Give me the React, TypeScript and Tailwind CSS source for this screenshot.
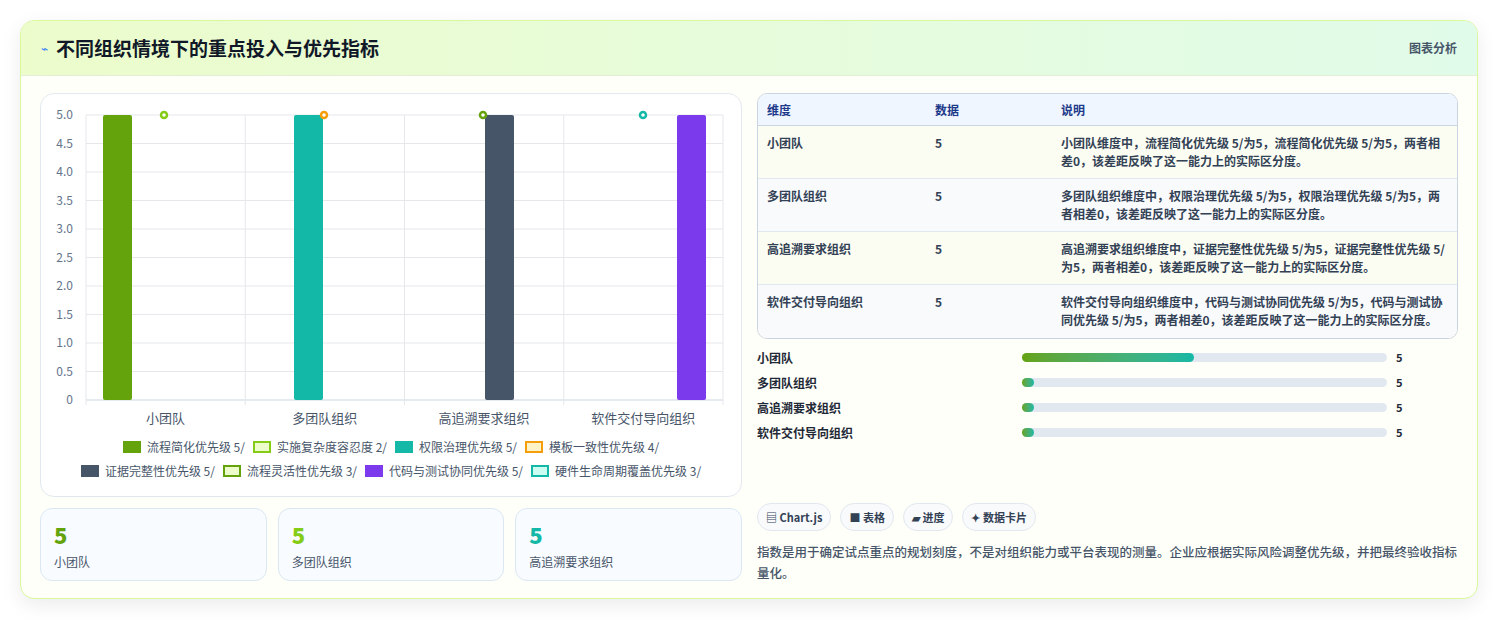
import React from "react";

const F = { fontFamily: '"Noto Sans CJK SC", "Noto Sans", sans-serif' };

function Chart() {
  const x0 = 45, x1 = 682, yTop = 15, yBot = 300;
  const ticks = ["5.0","4.5","4.0","3.5","3.0","2.5","2.0","1.5","1.0","0.5","0"];
  const cw = (x1 - x0) / 4;
  const bars = [
    { x: 62, c: "#65a30d" }, { x: 253, c: "#14b8a6" }, { x: 444, c: "#475569" }, { x: 636, c: "#7c3aed" },
  ];
  const dots = [
    { x: 123, c: "#84cc16" }, { x: 283, c: "#f59e0b" }, { x: 442, c: "#65a30d" }, { x: 602, c: "#14b8a6" },
  ];
  const cats = ["小团队", "多团队组织", "高追溯要求组织", "软件交付导向组织"];
  return (
    <svg width="700" height="332" style={F}>
      {ticks.map((t, i) => {
        const y = yTop + i * 28.5;
        return (
          <g key={t}>
            <line x1={x0} x2={x1} y1={y} y2={y} stroke={i === 10 ? "#cbd5e1" : "#e5e7eb"} />
            <text x={32} y={y + 4} fontSize="12" fill="#64748b" textAnchor="end">{t}</text>
          </g>
        );
      })}
      {[0, 1, 2, 3, 4].map(i => (
        <line key={i} x1={x0 + i * cw} x2={x0 + i * cw} y1={yTop} y2={yBot + 5} stroke="#e5e7eb" />
      ))}
      {bars.map((b, i) => (
        <rect key={i} x={b.x} y={yTop} width={29} height={yBot - yTop} rx={2} fill={b.c} />
      ))}
      {dots.map((d, i) => (
        <circle key={i} cx={d.x} cy={yTop} r={3} fill="#fff" stroke={d.c} strokeWidth={2.5} />
      ))}
      {cats.map((c, i) => (
        <text key={c} x={x0 + cw * i + cw / 2} y={323} fontSize="13" fill="#475569" textAnchor="middle">{c}</text>
      ))}
    </svg>
  );
}

const legend1 = [
  { l: "流程简化优先级 5/", bg: "#65a30d", b: "#65a30d" },
  { l: "实施复杂度容忍度 2/", bg: "#ecfccb", b: "#84cc16" },
  { l: "权限治理优先级 5/", bg: "#14b8a6", b: "#14b8a6" },
  { l: "模板一致性优先级 4/", bg: "#fef3c7", b: "#f59e0b" },
];
const legend2 = [
  { l: "证据完整性优先级 5/", bg: "#475569", b: "#475569" },
  { l: "流程灵活性优先级 3/", bg: "#ecfccb", b: "#65a30d" },
  { l: "代码与测试协同优先级 5/", bg: "#7c3aed", b: "#7c3aed" },
  { l: "硬件生命周期覆盖优先级 3/", bg: "#ccfbf1", b: "#14b8a6" },
];

function Legend({ items }: { items: typeof legend1 }) {
  return (
    <div className="flex justify-center gap-[8px]">
      {items.map(it => (
        <div key={it.l} className="flex items-center gap-[6px] text-[12px] text-[#475569]">
          <span className="w-[18px] h-[12px] border-[2px]" style={{ background: it.bg, borderColor: it.b }} />
          {it.l}
        </div>
      ))}
    </div>
  );
}

const rows = [
  ["小团队", "小团队维度中，流程简化优先级 5/为5，流程简化优先级 5/为5，两者相差0，该差距反映了这一能力上的实际区分度。"],
  ["多团队组织", "多团队组织维度中，权限治理优先级 5/为5，权限治理优先级 5/为5，两者相差0，该差距反映了这一能力上的实际区分度。"],
  ["高追溯要求组织", "高追溯要求组织维度中，证据完整性优先级 5/为5，证据完整性优先级 5/为5，两者相差0，该差距反映了这一能力上的实际区分度。"],
  ["软件交付导向组织", "软件交付导向组织维度中，代码与测试协同优先级 5/为5，代码与测试协同优先级 5/为5，两者相差0，该差距反映了这一能力上的实际区分度。"],
];

export default function App() {
  return (
    <div className="w-[1498px] h-[620px] bg-white pt-[20px] px-[20px]" style={F}>
      <div className="w-[1458px] h-[579px] rounded-[14px] border border-[#d9f99d] bg-[#fefff8] shadow-[0_6px_20px_rgba(0,0,0,0.08)] overflow-hidden">
        <div className="h-[55px] flex items-center justify-between px-[20px] border-b border-[#e5efd8] bg-gradient-to-r from-[#ecfccb] to-[#e0fbe9]">
          <div className="flex items-center gap-[8px]">
            <span className="text-[#3b82f6] text-[12px]">⌁</span>
            <span className="text-[19px] font-bold text-[#111827]">不同组织情境下的重点投入与优先指标</span>
          </div>
          <span className="text-[12px] font-semibold text-[#475569]">图表分析</span>
        </div>
        <div className="flex gap-[15px] px-[19px] pt-[17px]">
          <div className="w-[702px] flex flex-col gap-[11px]">
            <div className="h-[404px] rounded-[14px] border border-[#e2e8f0] bg-white pt-[6px]">
              <Chart />
              <div className="flex flex-col gap-[6px] mt-[6px]">
                <Legend items={legend1} />
                <Legend items={legend2} />
              </div>
            </div>
            <div className="flex gap-[11px]">
              {[["小团队", "#65a30d"], ["多团队组织", "#84cc16"], ["高追溯要求组织", "#14b8a6"]].map(([l, c]) => (
                <div key={l} className="flex-1 h-[73px] rounded-[12px] border border-[#dbe7f3] bg-[#f8fbff] px-[13px] pt-[12px]">
                  <div className="text-[22px] font-extrabold leading-[26px]" style={{ color: c }}>5</div>
                  <div className="text-[12px] text-[#475569] mt-[6px]">{l}</div>
                </div>
              ))}
            </div>
          </div>
          <div className="flex-1 flex flex-col">
            <div className="rounded-[10px] border border-[#cbd5e1] overflow-hidden">
              <div className="flex h-[32px] items-center bg-[#eff6ff] border-b border-[#cbd5e1] text-[12px] font-bold text-[#1e3a8a]">
                <div className="w-[177px] pl-[9px]">维度</div>
                <div className="w-[126px]">数据</div>
                <div className="flex-1">说明</div>
              </div>
              {rows.map(([a, b], i) => (
                <div key={a} className={`flex h-[53px] pt-[8px] text-[12px] font-semibold text-[#334155] ${i % 2 === 0 ? "bg-[#fbfdf3]" : "bg-[#f8fafc]"} ${i < 3 ? "border-b border-[#e2e8f0]" : ""}`}>
                  <div className="w-[177px] pl-[9px]">{a}</div>
                  <div className="w-[126px]">5</div>
                  <div className="flex-1 pr-[12px] leading-[18px]">{b}</div>
                </div>
              ))}
            </div>
            <div className="flex flex-col gap-[8px] mt-[10px]">
              {rows.map(([a], i) => (
                <div key={a} className="flex items-center h-[17px] text-[12px] font-semibold text-[#1f2937]">
                  <div className="w-[265px]">{a}</div>
                  <div className="w-[365px] h-[9px] rounded-full bg-[#e2e8f0]">
                    <div className="h-full rounded-full bg-gradient-to-r from-[#65a30d] to-[#14b8a6]" style={{ width: i === 0 ? 172 : 12 }} />
                  </div>
                  <div className="ml-[9px] text-[11px] font-bold">5</div>
                </div>
              ))}
            </div>
            <div className="flex gap-[9px] mt-[62px]">
              {["▤ Chart.js", "■ 表格", "▰ 进度", "✦ 数据卡片"].map(t => (
                <div key={t} className="h-[28px] px-[8px] rounded-full border border-[#e2e8f0] bg-[#f8fafc] flex items-center text-[11px] font-bold text-[#334155]">{t}</div>
              ))}
            </div>
            <p className="mt-[10px] text-[12.5px] leading-[21px] font-medium text-[#475569]">指数是用于确定试点重点的规划刻度，不是对组织能力或平台表现的测量。企业应根据实际风险调整优先级，并把最终验收指标量化。</p>
          </div>
        </div>
      </div>
    </div>
  );
}
